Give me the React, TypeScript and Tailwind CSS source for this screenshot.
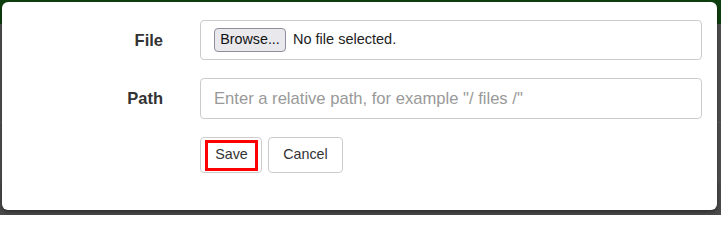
export default function App() {
  return (
    <div className="relative w-[721px] h-[215px] overflow-hidden bg-[#4a4a4a] font-['Liberation_Sans',Arial,sans-serif]">
      {/* page behind the backdrop */}
      <div className="h-[24px] bg-[#0e3f0e]" />
      <div className="h-[99px] border-b border-[#5c5c5c] bg-[#4f4f4f]" />
      <div className="h-[60px] bg-[#4f4f4f]" />

      {/* modal */}
      <div className="absolute left-[2px] top-[2px] w-[715px] h-[208px] rounded-[6px] bg-white shadow-[0_2px_4px_rgba(0,0,0,0.4)]">
        <div className="flex flex-col gap-[18px] pt-[18px] pr-[15px]">
          <div className="flex items-center">
            <label className="w-[161px] shrink-0 text-right text-[16.5px] font-bold text-[#333]">
              File
            </label>
            <div className="ml-[37px] flex h-[40px] flex-1 items-center rounded-[4px] border border-[#ccc] px-[13px]">
              <span className="flex h-[24px] w-[72px] items-center justify-center rounded-[4px] border border-[#8f8f9d] bg-[#e9e9ed] text-[14.3px] text-[#111]">
                Browse...
              </span>
              <span className="ml-[7px] text-[14.5px] text-[#222]">No file selected.</span>
            </div>
          </div>

          <div className="flex items-center">
            <label className="w-[161px] shrink-0 text-right text-[16.5px] font-bold text-[#333]">
              Path
            </label>
            <input
              className="ml-[37px] h-[41px] flex-1 rounded-[4px] border border-[#ccc] px-[13px] text-[16.6px] text-[#555] outline-none placeholder:text-[#999]"
              placeholder={'Enter a relative path, for example "/ files /"'}
            />
          </div>

          <div className="flex gap-[6px] pl-[198px]">
            <button className="flex h-[36px] w-[62px] items-center rounded-[4px] border border-[#ccc] bg-white pl-[4px]">
              <span className="flex h-[31px] w-[53px] items-center justify-center border-[3px] border-[#ff0000] text-[14.3px] text-[#333]">
                Save
              </span>
            </button>
            <button className="h-[36px] w-[75px] rounded-[4px] border border-[#ccc] bg-white text-[14.3px] text-[#333]">
              Cancel
            </button>
          </div>
        </div>
      </div>
    </div>
  );
}
